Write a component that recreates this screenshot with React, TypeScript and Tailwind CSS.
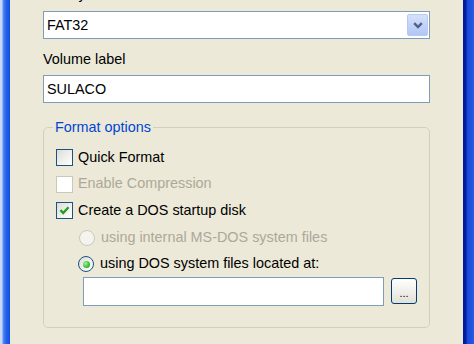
import React from "react";

const font = { fontFamily: '"Liberation Sans", Arial, sans-serif' };

function CheckBox({ checked, disabled }: { checked?: boolean; disabled?: boolean }) {
  return (
    <div
      className={
        "w-[17px] h-[17px] shrink-0 border flex items-center justify-center " +
        (disabled
          ? "border-[#cac8bb] bg-white"
          : "border-[#1c5180] bg-[linear-gradient(135deg,#dcdcd7_0%,#f2f2ef_60%,#ffffff_100%)]")
      }
    >
      {checked && (
        <svg width="11" height="11" viewBox="0 0 11 11">
          <path d="M1.5 5.2 L4.2 8 L9.5 2.2" fill="none" stroke="#21a121" strokeWidth="2.4" />
        </svg>
      )}
    </div>
  );
}

function Radio({ checked, disabled }: { checked?: boolean; disabled?: boolean }) {
  return (
    <div
      className={
        "w-[16px] h-[16px] shrink-0 rounded-full border flex items-center justify-center " +
        (disabled
          ? "border-[#cac8bb] bg-[#f4f3ee]"
          : "border-[#1c5180] bg-[linear-gradient(135deg,#dcdcd7_0%,#f2f2ef_60%,#ffffff_100%)]")
      }
    >
      {checked && (
        <div className="w-[7px] h-[7px] rounded-full bg-[radial-gradient(circle_at_35%_35%,#a8ee9f_0%,#40c23a_55%,#1c9c18_100%)]" />
      )}
    </div>
  );
}

export default function App() {
  return (
    <div className="w-[474px] h-[344px] overflow-hidden flex bg-[#ece9d8] text-[14.4px] text-black" style={font}>
      <div className="w-[10px] h-full shrink-0 bg-[linear-gradient(to_right,#c9d8f7_0px,#c9d8f7_2px,#5a8df2_3px,#2563e8_6px,#0d4fe0_10px)]" />
      <div className="w-[453px] h-full shrink-0 pl-[33px] flex flex-col">
        <div className="-mt-[15px] h-[18px] leading-[18px] pl-[1px]">File system</div>
        <div className="mt-[8px] w-[387px] h-[28px] border border-[#7f9db9] bg-white flex items-center justify-between">
          <span className="pl-[3px] leading-none">FAT32</span>
          <div className="w-[21px] h-[22px] mr-[1px] rounded-[2px] border border-[#b8c9f2] bg-[linear-gradient(to_bottom,#d6e1fb_0%,#c2d3f8_50%,#b2c6f5_100%)] flex items-center justify-center">
            <svg width="10" height="7" viewBox="0 0 10 7">
              <path d="M1.2 1.2 L5 5 L8.8 1.2" fill="none" stroke="#4d6185" strokeWidth="2.4" />
            </svg>
          </div>
        </div>
        <div className="mt-[11px] h-[18px] leading-[18px]">Volume label</div>
        <div className="mt-[7px] w-[387px] h-[28px] border border-[#7f9db9] bg-white flex items-center">
          <span className="pl-[3px] leading-none">SULACO</span>
        </div>
        <fieldset className="mt-[15px] w-[387px] h-[210px] border border-[#d0d0bf] rounded-[5px] pl-[12px] pr-0 pt-[8px] m-0 min-w-0">
          <legend className="-ml-[3px] px-[2px] h-[18px] leading-[18px] text-[#0046d5]">Format options</legend>
          <div className="h-[27px] flex items-center gap-[5px]">
            <CheckBox />
            <span>Quick Format</span>
          </div>
          <div className="h-[26px] flex items-center gap-[5px] text-[#aca899]">
            <CheckBox disabled />
            <span>Enable Compression</span>
          </div>
          <div className="h-[27px] flex items-center gap-[5px]">
            <CheckBox checked />
            <span>Create a DOS startup disk</span>
          </div>
          <div className="h-[27px] flex items-center gap-[6px] pl-[23px] text-[#aca899]">
            <Radio disabled />
            <span>using internal MS-DOS system files</span>
          </div>
          <div className="h-[26px] flex items-center gap-[6px] pl-[22px]">
            <Radio checked />
            <span>using DOS system files located at:</span>
          </div>
          <div className="flex items-start gap-[7px] pl-[27px]">
            <div className="w-[301px] h-[29px] border border-[#7f9db9] bg-white" />
            <button className="mt-[1px] w-[26px] h-[26px] rounded-[3px] border border-[#003c74] bg-[linear-gradient(to_bottom,#ffffff_0%,#f3f3ef_40%,#e2e0d6_100%)] flex items-end justify-center pb-[4px] text-[11px] leading-none">
              ...
            </button>
          </div>
        </fieldset>
      </div>
      <div className="flex-1 h-full bg-[linear-gradient(to_right,#001c9e_0px,#001c9e_3px,#1647d6_4px,#2a5ce6_11px)]" />
    </div>
  );
}
